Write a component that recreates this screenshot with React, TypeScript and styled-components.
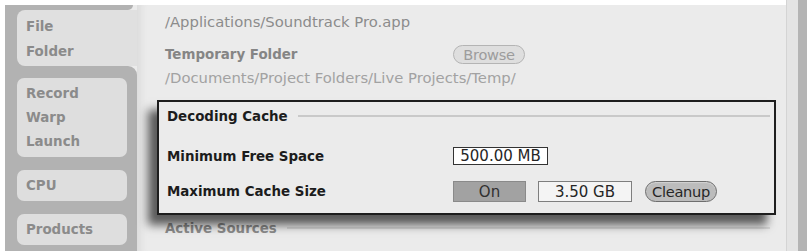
import React from 'react';
import styled, { createGlobalStyle } from 'styled-components';

const GlobalStyle = createGlobalStyle`
  html, body {
    margin: 0;
    padding: 0;
    background: #ffffff;
  }
  body {
    font-family: 'DejaVu Sans', 'Liberation Sans', sans-serif;
    overflow: hidden;
  }
`;

const GRAY = '#b2b2b2';
const PANEL = '#ebebeb';

function App() {
  return (
    <>
      <GlobalStyle />
      <Frame>
        <Sidebar>
          <TopCap />
          <SelectedRow>
            <SelectedTab>
              File
              <br />
              Folder
            </SelectedTab>
          </SelectedRow>
          <TabGroup>
            <Tab>
              Record
              <br />
              Warp
              <br />
              Launch
            </Tab>
            <Tab>CPU</Tab>
            <Tab>Products</Tab>
          </TabGroup>
        </Sidebar>

        <Content>
          <PathText>/Applications/Soundtrack Pro.app</PathText>
          <Row $top={16}>
            <MutedLabel $width={288}>Temporary Folder</MutedLabel>
            <PillButton $variant="muted">Browse</PillButton>
          </Row>
          <PathText $light $top={7}>
            /Documents/Project Folders/Live Projects/Temp/
          </PathText>

          <Callout>
            <SectionHeader>
              <span>Decoding Cache</span>
              <Rule />
            </SectionHeader>
            <Row $top={24}>
              <Label $width={286}>Minimum Free Space</Label>
              <ValueBox $width={95} $height={18}>
                500.00 MB
              </ValueBox>
            </Row>
            <Row $top={16}>
              <Label $width={286}>Maximum Cache Size</Label>
              <ToggleButton>On</ToggleButton>
              <ValueBox $width={94} $height={21} $dim>
                3.50 GB
              </ValueBox>
              <PillButton $variant="strong">Cleanup</PillButton>
            </Row>
          </Callout>

          <SectionHeader $muted $top={6}>
            <span>Active Sources</span>
            <Rule $muted />
          </SectionHeader>
        </Content>

        <RightEdge>
          <EdgeLight />
          <EdgeDark />
        </RightEdge>
      </Frame>
    </>
  );
}

export default App;

const Frame = styled.div`
  display: flex;
  margin: 5px 0 0 5px;
  height: 246px;
`;

const Sidebar = styled.div`
  width: 132px;
  display: flex;
  flex-direction: column;
  background: ${PANEL};
`;

const TopCap = styled.div`
  height: 5px;
  width: 128px;
  background: ${GRAY};
  border-bottom-right-radius: 6px;
`;

const SelectedRow = styled.div`
  padding-left: 12px;
  background: ${GRAY};
`;

const tabText = `
  font-size: 13.4px;
  font-weight: bold;
  color: #8b8b8b;
`;

const SelectedTab = styled.div`
  ${tabText};
  height: 56px;
  box-sizing: border-box;
  padding: 4px 9px 2px;
  line-height: 25px;
  background: #e0e0e0;
  border-radius: 8px 0 0 8px;
`;

const TabGroup = styled.div`
  flex: 1;
  display: flex;
  flex-direction: column;
  gap: 13px;
  padding: 12px 10px 0 12px;
  background: ${GRAY};
  border-top-right-radius: 9px;
`;

const Tab = styled.div`
  ${tabText};
  padding: 3.5px 9px;
  line-height: 24px;
  background: #dedede;
  border-radius: 7px;
`;

const Content = styled.div`
  flex: 1;
  background: ${PANEL};
  padding: 10px 16px 0 28px;
  box-shadow: inset 10px 0 6px -6px #dcdcdc;
`;

const PathText = styled.div<{ $light?: boolean; $top?: number }>`
  font-size: 14.8px;
  line-height: 14px;
  height: 14px;
  white-space: nowrap;
  margin-top: ${p => p.$top || 0}px;
  color: ${p => (p.$light ? '#a2a2a2' : '#8c8c8c')};
`;

const Row = styled.div<{ $top: number }>`
  display: flex;
  align-items: center;
  gap: 12px;
  margin-top: ${p => p.$top}px;
`;

const Label = styled.div<{ $width: number }>`
  width: ${p => p.$width}px;
  margin-right: -12px;
  flex-shrink: 0;
  font-size: 13.4px;
  font-weight: bold;
  color: #1c1c1c;
  white-space: nowrap;
`;

const MutedLabel = styled(Label)`
  color: #858585;
`;

const PillButton = styled.div<{ $variant: 'muted' | 'strong' }>`
  width: 72px;
  height: ${p => (p.$variant === 'muted' ? 19 : 21)}px;
  margin-left: ${p => (p.$variant === 'strong' ? 1 : 0)}px;
  box-sizing: border-box;
  display: flex;
  align-items: center;
  justify-content: center;
  font-size: 14.6px;
  letter-spacing: -0.3px;
  border-radius: 11px;
  border: 1px solid ${p => (p.$variant === 'muted' ? '#b4b4b4' : '#6e6e6e')};
  background: ${p => (p.$variant === 'muted' ? '#dedede' : '#bcbcbc')};
  color: ${p => (p.$variant === 'muted' ? '#9c9c9c' : '#262626')};
  box-shadow: ${p =>
    p.$variant === 'strong' ? 'inset 0 1px 1px rgba(255,255,255,0.35)' : 'none'};
`;

const ToggleButton = styled.div`
  width: 73px;
  height: 21px;
  box-sizing: border-box;
  display: flex;
  align-items: center;
  justify-content: center;
  font-size: 15px;
  color: #303030;
  background: #a2a2a2;
  border: 1px solid #8a8a8a;
`;

const ValueBox = styled.div<{ $width: number; $height: number; $dim?: boolean }>`
  width: ${p => p.$width}px;
  height: ${p => p.$height}px;
  box-sizing: border-box;
  display: flex;
  align-items: center;
  justify-content: center;
  font-size: 15px;
  color: #262626;
  background: ${p => (p.$dim ? '#f4f4f4' : '#ffffff')};
  border: 1px solid ${p => (p.$dim ? '#7e7e7e' : '#333333')};
`;

const Callout = styled.div`
  position: relative;
  z-index: 1;
  margin: 15px -6px 0 -8px;
  padding: 7px 4px 11px 8px;
  background: ${PANEL};
  border: 2px solid #1e1e1e;
  box-shadow: -9px 10px 9px rgba(0, 0, 0, 0.62);
`;

const SectionHeader = styled.div<{ $muted?: boolean; $top?: number }>`
  display: flex;
  align-items: center;
  gap: 10px;
  height: 14px;
  margin-top: ${p => p.$top || 0}px;
  font-size: 13.4px;
  font-weight: bold;
  white-space: nowrap;
  color: ${p => (p.$muted ? '#8a8a8a' : '#1c1c1c')};
`;

const Rule = styled.div<{ $muted?: boolean }>`
  flex: 1;
  height: 2px;
  background: ${p => (p.$muted ? '#d6d6d6' : '#c9c9c9')};
`;

const RightEdge = styled.div`
  display: flex;
  width: 21px;
  margin-top: -5px;
`;

const EdgeLight = styled.div`
  width: 11px;
  background: #e4e4e4;
  border-left: 1px solid #d4d4d4;
`;

const EdgeDark = styled.div`
  flex: 1;
  background: #b4b4b4;
`;
